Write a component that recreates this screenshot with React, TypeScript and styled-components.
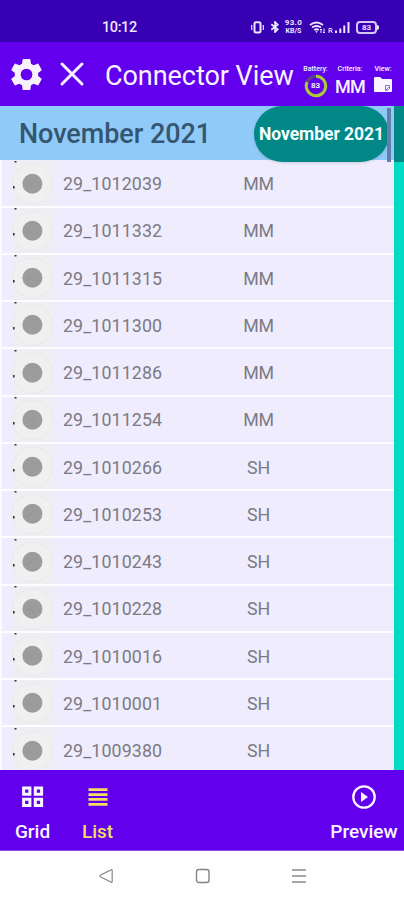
import React from 'react';
import styled, { createGlobalStyle } from 'styled-components';

const GlobalStyle = createGlobalStyle`
  * { box-sizing: border-box; }
  body { margin: 0; background: #fff; font-family: Roboto, 'Liberation Sans', sans-serif; }
  svg { display: block; flex: none; }
`;

const Screen = styled.div`
  width: 404px;
  height: 900px;
  display: flex;
  flex-direction: column;
  overflow: hidden;
  background: #fefefe;
`;

const StatusBar = styled.header`
  height: 42px;
  flex: none;
  display: flex;
  align-items: center;
  padding: 12px 27px 0 102px;
  background: #3700b3;
  color: #eee5ff;
`;

const Clock = styled.time`
  font-size: 14.5px;
  font-weight: 500;
  line-height: 18px;
  letter-spacing: -0.4px;
  margin: 1px auto 0 0;
`;

const StatusIcons = styled.div`
  display: flex;
  align-items: center;
  height: 18px;
`;

const Speed = styled.div`
  width: 19px;
  margin: 0 6px 0 4px;
  display: flex;
  flex-direction: column;
  align-items: center;
  font-weight: 700;
`;

const SpeedValue = styled.span`
  font-size: 8px;
  line-height: 8px;
  letter-spacing: 0.3px;
`;

const SpeedUnit = styled.span`
  font-size: 7px;
  line-height: 8px;
`;

const PhoneBattery = styled.div`
  width: 21px;
  height: 13px;
  margin-left: 6px;
  border: 2px solid #d6c7f5;
  border-radius: 4px;
  display: flex;
  align-items: center;
  justify-content: center;
  font-size: 8px;
  font-weight: 700;
  position: relative;
  &::after {
    content: '';
    position: absolute;
    right: -4px;
    top: 2px;
    width: 2px;
    height: 5px;
    border-radius: 0 2px 2px 0;
    background: #eee5ff;
  }
`;

const AppBar = styled.div`
  height: 64px;
  flex: none;
  display: flex;
  align-items: center;
  padding-left: 7px;
  background: #6200ee;
  color: #f8f2ff;
`;

const Title = styled.h1`
  width: 188px;
  margin: 3px 10px 0 20px;
  font-size: 27px;
  line-height: 32px;
  font-weight: 400;
  letter-spacing: -0.05px;
  white-space: nowrap;
`;

const Indicator = styled.div<{ $width: number; $gap?: number }>`
  width: ${({ $width }) => $width}px;
  height: 34px;
  margin-left: ${({ $gap = 0 }) => $gap}px;
  margin-top: 15px;
  display: flex;
  flex-direction: column;
  align-items: center;
`;

const IndicatorLabel = styled.span`
  font-size: 7px;
  line-height: 8px;
  font-weight: 500;
  letter-spacing: 0;
  white-space: nowrap;
`;

const Criteria = styled.span`
  font-size: 18px;
  line-height: 24px;
  font-weight: 500;
  letter-spacing: -0.8px;
  margin-top: 2px;
`;

const Gauge = styled.div`
  width: 24px;
  height: 24px;
  display: grid;
  place-items: center;
  margin-top: 1px;
  > * { grid-area: 1 / 1; }
  span { font-size: 8px; line-height: 9px; font-weight: 700; }
`;

const Content = styled.main`
  height: 664px;
  flex: none;
  display: flex;
  position: relative;
  overflow: hidden;
`;

const ListPane = styled.section`
  width: 394px;
`;

const MonthHeader = styled.h2`
  height: 54.4px;
  margin: 0;
  padding: 1px 0 0 19px;
  background: #90caf9;
  color: #35566f;
  font-size: 27px;
  line-height: 54px;
  font-weight: 500;
  letter-spacing: -0.05px;
  white-space: nowrap;
`;

const Row = styled.div`
  height: 47.25px;
  border-left: 2px solid #fbfaff;
  border-bottom: 2px solid #fdfcff;
  background: #eeecfd;
  display: grid;
  grid-template-columns: 51px 10px 145px 101px;
  align-items: center;
  color: #7c7a84;
  font-size: 17.8px;
  line-height: 24px;
`;

const RowId = styled.span`
  grid-column: 3;
  padding-top: 2px;
  letter-spacing: 0.12px;
`;

const RowCriteria = styled.span`
  grid-column: 4;
  padding-top: 2px;
  text-align: center;
  letter-spacing: -0.2px;
`;

const Rail = styled.div`
  width: 10px;
  background: #03dac5;
  &::before {
    content: '';
    display: block;
    height: 56px;
    background: #018786;
  }
`;

const DateBubble = styled.div`
  position: absolute;
  top: 0;
  left: 254px;
  width: 135px;
  height: 56px;
  border-radius: 28px;
  background: #018786;
  box-shadow: 0 1px 3px #0002;
  color: #f5ffff;
  font-size: 17.5px;
  line-height: 57px;
  font-weight: 700;
  text-align: center;
  letter-spacing: -0.05px;
  white-space: nowrap;
`;

const ScrollThumb = styled.div`
  position: absolute;
  top: 2px;
  left: 387px;
  width: 4px;
  height: 54px;
  background: #627fa9;
`;

const BottomBar = styled.nav`
  height: 81px;
  flex: none;
  display: flex;
  background: #6200ee;
  border-bottom: 1px solid #8d4cee;
`;

const Tab = styled.button<{ $width: number; $active?: boolean; $end?: boolean }>`
  width: ${({ $width }) => $width}px;
  margin-left: ${({ $end }) => ($end ? 'auto' : 0)};
  padding: 14px 0 0;
  border: 0;
  background: none;
  color: ${({ $active }) => ($active ? '#f1df62' : '#fbf5ff')};
  display: flex;
  flex-direction: column;
  align-items: center;
  font: 500 19px/24px Roboto, sans-serif;
  gap: 10px;
  white-space: nowrap;
`;

const SystemNav = styled.footer`
  height: 49px;
  flex: none;
  display: flex;
  align-items: center;
  justify-content: center;
  gap: 80px;
  background: #fefefe;
`;

const Gear = () => (
  <svg width="39" height="39" viewBox="0 0 24 24" fill="currentColor">
    <path d="M19.14 12.94c.04-.3.06-.61.06-.94 0-.32-.02-.64-.07-.94l2.03-1.58c.18-.14.23-.41.12-.61l-1.92-3.32c-.12-.22-.37-.29-.59-.22l-2.39.96c-.5-.38-1.03-.7-1.62-.94L14.4 2.81c-.04-.24-.24-.41-.48-.41h-3.84c-.24 0-.43.17-.47.41l-.36 2.54c-.59.24-1.13.57-1.62.94l-2.39-.96c-.22-.08-.47 0-.59.22L2.74 8.87c-.12.21-.08.47.12.61l2.03 1.58c-.05.3-.09.63-.09.94s.02.64.07.94l-2.03 1.58c-.18.14-.23.41-.12.61l1.92 3.32c.12.22.37.29.59.22l2.39-.96c.5.38 1.03.7 1.62.94l.36 2.54c.05.24.24.41.48.41h3.84c.24 0 .44-.17.47-.41l.36-2.54c.59-.24 1.13-.56 1.62-.94l2.39.96c.22.08.47 0 .59-.22l1.92-3.32c.12-.22.07-.47-.12-.61l-2.01-1.58zM12 15.6A3.6 3.6 0 1 1 12 8.4a3.6 3.6 0 0 1 0 7.2z" />
  </svg>
);

const Close = () => (
  <svg width="26" height="26" viewBox="0 0 26 26" stroke="currentColor" strokeWidth="3" strokeLinecap="round">
    <path d="M3 3 23 23M23 3 3 23" />
  </svg>
);

const CloseButton = styled.div`
  margin-left: 13px;
  width: 26px;
`;

const Vibrate = () => (
  <svg width="13" height="13" viewBox="0 0 13 13" fill="none" stroke="currentColor">
    <rect x="3.5" y="1.2" width="6" height="10.2" rx="1.5" strokeWidth="2" />
    <path d="M.7 4v5M12.3 4v5" strokeWidth="1.2" />
  </svg>
);

const Bluetooth = () => (
  <svg width="10" height="12" viewBox="0 0 10 13" fill="none" stroke="currentColor" strokeWidth="1.8">
    <path d="m1 3.5 7 5.5-3 3V1l3 3-7 5.5" />
  </svg>
);

const Wifi = () => (
  <svg width="17" height="13" viewBox="0 0 17 13" fill="none" stroke="currentColor" strokeWidth="1.8">
    <path d="M1 4q6.5-5 13 0M3 6.5q4.5-3 9 0M5.3 9q2.2-1.5 4.4 0" />
    <path d="m6.2 10.2 1.3 1.7 1.3-1.7z" fill="currentColor" stroke="none" />
    <path d="M12 8v4m-1-3 1-1 1 1M15 7.5V12m-1-1 1 1 1-1" strokeWidth="1" />
  </svg>
);

const Signal = () => (
  <svg width="22" height="13" viewBox="0 0 22 13" fill="none" stroke="currentColor">
    <path d="M1 12V7.5h2.2q1 .2 1 1.1T3.2 9.8H1m2 0L4.5 12" strokeWidth="1" />
    <path d="M8 12V9.5M12.3 12V7.5M16.3 12V4.5M20.5 12V1" strokeWidth="2" />
  </svg>
);

const StatusGap = styled.span<{ $width: number }>`
  width: ${({ $width }) => $width}px;
`;

const BatteryRing = () => (
  <svg width="24" height="24" viewBox="0 0 24 24" fill="none" strokeWidth="3">
    <circle cx="12" cy="12" r="9.7" stroke="#5d467f" />
    <path d="M12 2.3a9.7 9.7 0 1 1-8.9 5.8" stroke="#aacb3a" />
  </svg>
);

const FolderBox = styled.div`
  margin-top: 4px;
`;

const Folder = () => (
  <svg width="18" height="16" viewBox="0 0 18 16">
    <path d="M1 0h5l2.2 2H17q1 0 1 1v11q0 1-1 1H1q-1 0-1-1V1q0-1 1-1Z" fill="#faf5ff" />
    <path d="M11.5 8.5h4v3l-2 2h-2zM12 13l4-4" fill="none" stroke="#946bd5" />
  </svg>
);

const Specimen = () => (
  <svg width="51" height="45" viewBox="0 0 51 45">
    <rect x="11" width="40" height="45" fill="#f0eef2" />
    <circle cx="30.5" cy="23" r="20" fill="#f1f0f0" stroke="#eae8e8" />
    <circle cx="30.4" cy="22.8" r="10" fill="#9d9c9b" />
    <path d="m24 20 9 7M24 26l10-8" stroke="#939291" strokeWidth="1" opacity=".4" />
    <path d="M12.5 0h2v1.6h-2zM11 25h1.6v2.6H11z" fill="#37363b" />
  </svg>
);

const GridIcon = () => (
  <svg width="26" height="26" viewBox="0 0 26 26" fill="none" stroke="currentColor" strokeWidth="3">
    <path d="M3.6 4h6.3v6.3H3.6zM15.3 4h6.3v6.3h-6.3zM3.6 15.3h6.3v6.3H3.6zM15.3 15.3h6.3v6.3h-6.3z" />
  </svg>
);

const ListIcon = () => (
  <svg width="26" height="26" viewBox="0 0 26 26" stroke="currentColor" strokeWidth="2.8">
    <path d="M3.5 5.6h19M3.5 10.7h19M3.5 15.3h19M3.5 20.4h19" />
  </svg>
);

const PlayIcon = () => (
  <svg width="26" height="26" viewBox="0 0 26 26" fill="none" stroke="currentColor" strokeWidth="2.3">
    <circle cx="13" cy="13" r="10.7" />
    <path d="m10 8 7 5-7 5z" fill="currentColor" stroke="none" />
  </svg>
);

const Back = () => (
  <svg width="17" height="18" viewBox="0 0 17 18" fill="none" stroke="#929292" strokeWidth="1.3">
    <path d="M2.4 8.2 13 2.8q1.2-.5 1.2.7v11q0 1.2-1.2.6L2.4 9.8q-1.2-.8 0-1.6Z" />
  </svg>
);

const Home = () => (
  <svg width="16" height="18" viewBox="0 0 16 18" fill="none" stroke="#858585" strokeWidth="1.4">
    <rect x="1.5" y="2.5" width="12.5" height="13" rx="2.5" />
  </svg>
);

const Recents = () => (
  <svg width="16" height="18" viewBox="0 0 16 18" stroke="#8a8a8a" strokeWidth="1.5">
    <path d="M1 3h14M1 9h14M1 15h14" />
  </svg>
);

const connectors = [
  ['29_1012039', 'MM'], ['29_1011332', 'MM'], ['29_1011315', 'MM'],
  ['29_1011300', 'MM'], ['29_1011286', 'MM'], ['29_1011254', 'MM'],
  ['29_1010266', 'SH'], ['29_1010253', 'SH'], ['29_1010243', 'SH'],
  ['29_1010228', 'SH'], ['29_1010016', 'SH'], ['29_1010001', 'SH'],
  ['29_1009380', 'SH'],
];

export default function App() {
  return (
    <>
      <GlobalStyle />
      <Screen>
        <StatusBar>
          <Clock>10:12</Clock>
          <StatusIcons>
            <Vibrate /><StatusGap $width={6} /><Bluetooth />
            <Speed>
              <SpeedValue>93.0</SpeedValue>
              <SpeedUnit>KB/S</SpeedUnit>
            </Speed>
            <Wifi /><StatusGap $width={2} /><Signal />
            <PhoneBattery>83</PhoneBattery>
          </StatusIcons>
        </StatusBar>
        <AppBar>
          <Gear />
          <CloseButton><Close /></CloseButton>
          <Title>Connector View</Title>
          <Indicator $width={25}>
            <IndicatorLabel>Battery:</IndicatorLabel>
            <Gauge><BatteryRing /><span>83</span></Gauge>
          </Indicator>
          <Indicator $width={28} $gap={8}>
            <IndicatorLabel>Criteria:</IndicatorLabel>
            <Criteria>MM</Criteria>
          </Indicator>
          <Indicator $width={20} $gap={9}>
            <IndicatorLabel>View:</IndicatorLabel>
            <FolderBox><Folder /></FolderBox>
          </Indicator>
        </AppBar>
        <Content>
          <ListPane>
            <MonthHeader>November 2021</MonthHeader>
            {connectors.map(([id, criteria]) => (
              <Row key={id}>
                <Specimen />
                <RowId>{id}</RowId>
                <RowCriteria>{criteria}</RowCriteria>
              </Row>
            ))}
          </ListPane>
          <Rail />
          <DateBubble>November 2021</DateBubble>
          <ScrollThumb />
        </Content>
        <BottomBar>
          <Tab $width={65}><GridIcon />Grid</Tab>
          <Tab $width={65} $active><ListIcon />List</Tab>
          <Tab $width={80} $end><PlayIcon />Preview</Tab>
        </BottomBar>
        <SystemNav><Back /><Home /><Recents /></SystemNav>
      </Screen>
    </>
  );
}
